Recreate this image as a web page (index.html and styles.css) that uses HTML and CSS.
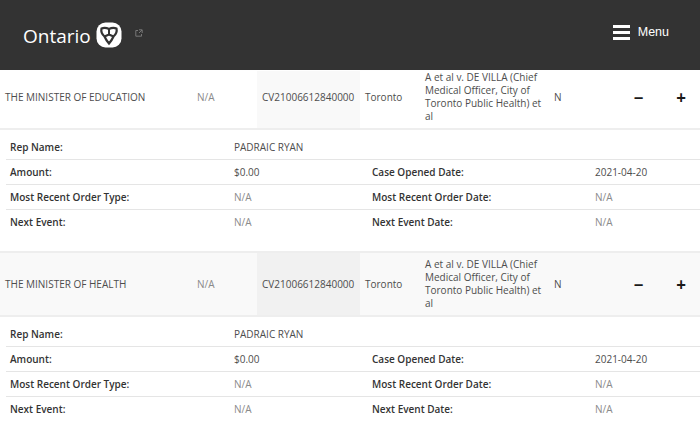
FILE: index.html
```html
<!DOCTYPE html>
<html lang="en">
<head>
  <meta charset="UTF-8" />
  <title>Ontario Court Cases</title>
  <link rel="stylesheet" href="styles.css">
</head>
<body>
<header class="site-header">
  <div class="brand">
    <span class="brand-name">Ontario</span>
    <svg class="trillium" viewBox="0 0 26 26" width="26" height="26" aria-hidden="true">
      <rect x="0.5" y="0.5" width="25" height="25" rx="9" fill="#fff"/>
      <g fill="none" stroke="#333">
        <path d="M5.500 6.500Q9 5 13 7Q17 5 20.500 6.500Q21.500 11 17.500 14.500Q16 18 13 21.500Q10 18 8.500 14.500Q4.500 11 5.500 6.500Z" stroke-width="2.200"/>
        <path d="M13 7V12.500M13 12.500 8.500 14.500M13 12.500 17.500 14.500" stroke-width="2"/>
      </g>
    </svg>
    <svg class="ext-icon" viewBox="0 0 8 8" width="8" height="8" aria-hidden="true">
      <path d="M3 1.500H.8v5.700h5.700V5M4 .8h3.200V4M7 1 4 4" fill="none" stroke="#777" stroke-width="1"/>
    </svg>
  </div>
  <div class="menu-btn">
    <span class="burger"><i></i><i></i><i></i></span>
    <span class="menu-label">Menu</span>
  </div>
</header>

<section class="case">
  <div class="case-row">
    <div class="cell party">THE MINISTER OF EDUCATION</div>
    <div class="cell muted">N/A</div>
    <div class="cell number">CV21006612840000</div>
    <div class="cell">Toronto</div>
    <div class="cell title">A et al v. DE VILLA (Chief Medical Officer, City of Toronto Public Health) et al</div>
    <div class="cell">N</div>
    <div class="cell toggle">&minus;</div>
    <div class="cell toggle plus">+</div>
  </div>
  <div class="details">
    <div class="detail-row">
      <b>Rep Name:</b><span>PADRAIC RYAN</span><span></span><span></span>
    </div>
    <div class="detail-row">
      <b>Amount:</b><span>$0.00</span><b>Case Opened Date:</b><span>2021-04-20</span>
    </div>
    <div class="detail-row">
      <b>Most Recent Order Type:</b><span class="muted">N/A</span><b>Most Recent Order Date:</b><span class="muted">N/A</span>
    </div>
    <div class="detail-row">
      <b>Next Event:</b><span class="muted">N/A</span><b>Next Event Date:</b><span class="muted">N/A</span>
    </div>
  </div>
</section>

<section class="case alt">
  <div class="case-row">
    <div class="cell party">THE MINISTER OF HEALTH</div>
    <div class="cell muted">N/A</div>
    <div class="cell number">CV21006612840000</div>
    <div class="cell">Toronto</div>
    <div class="cell title">A et al v. DE VILLA (Chief Medical Officer, City of Toronto Public Health) et al</div>
    <div class="cell">N</div>
    <div class="cell toggle">&minus;</div>
    <div class="cell toggle plus">+</div>
  </div>
  <div class="details">
    <div class="detail-row">
      <b>Rep Name:</b><span>PADRAIC RYAN</span><span></span><span></span>
    </div>
    <div class="detail-row">
      <b>Amount:</b><span>$0.00</span><b>Case Opened Date:</b><span>2021-04-20</span>
    </div>
    <div class="detail-row">
      <b>Most Recent Order Type:</b><span class="muted">N/A</span><b>Most Recent Order Date:</b><span class="muted">N/A</span>
    </div>
    <div class="detail-row">
      <b>Next Event:</b><span class="muted">N/A</span><b>Next Event Date:</b><span class="muted">N/A</span>
    </div>
  </div>
</section>
</body>
</html>
```

FILE: styles.css
```css
body {
  margin: 0;
  background: #fff;
  color: #4d4d4d;
  font-family: "Open Sans", sans-serif;
  font-size: 10px;
  overflow: hidden;
}

.site-header {
  height: 70px;
  background: #333;
  display: flex;
  align-items: center;
  justify-content: space-between;
  padding: 0 31px 0 23px;
}

.brand {
  display: flex;
  align-items: center;
}

.brand-name {
  color: #fff;
  font-family: "Open Sans", sans-serif;
  font-size: 19px;
  font-weight: 500;
  margin-top: 1px;
  width: 72px;
}

.trillium {
  margin: -1px 0 0 1px;
}

.ext-icon {
  margin: -5px 0 0 13px;
}

.menu-btn {
  display: flex;
  align-items: center;
  gap: 8px;
  color: #fff;
  margin-top: -6px;
}

.burger {
  display: flex;
  flex-direction: column;
  gap: 3px;
}

.burger i {
  display: block;
  width: 17px;
  height: 3px;
  background: #fff;
}

.menu-label {
  font-family: "Liberation Sans", sans-serif;
  font-size: 12.500px;
}

.case-row {
  display: grid;
  grid-template-columns: 192px 65px 103px 60px 129px 69px 41px 41px;
  height: 57px;
  margin-top: 1px;
  border-bottom: 2px solid #eee;
}

.cell {
  display: flex;
  align-items: center;
  padding: 0 0 5px 5px;
  line-height: 13px;
}

.alt .cell {
  padding-bottom: 0;
}

.party {
  color: #4d4d4d;
}

.number {
  background: #f9f9f9;
}

.cell.toggle {
  color: #1a1a1a;
  font-size: 17px;
  font-weight: 700;
  justify-content: center;
  padding-left: 0;
}

.cell.plus {
  padding-left: 3px;
}

.muted {
  color: #8a8a8a;
}

.alt .case-row {
  background: #f9f9f9;
  height: 62px;
  margin-top: 0;
  border-top: 2px solid #eee;
}

.alt .number {
  background: #f1f1f1;
}

.details {
  padding: 5px 0 17px 6px;
}

.detail-row {
  display: grid;
  grid-template-columns: 224px 138px 223px 1fr;
  align-items: center;
  height: 24px;
  padding-left: 4px;
  border-bottom: 1px solid #e5e5e5;
}

.detail-row:last-child {
  border-bottom: 0;
}

.detail-row b {
  font-weight: 600;
  color: #333;
}
```
